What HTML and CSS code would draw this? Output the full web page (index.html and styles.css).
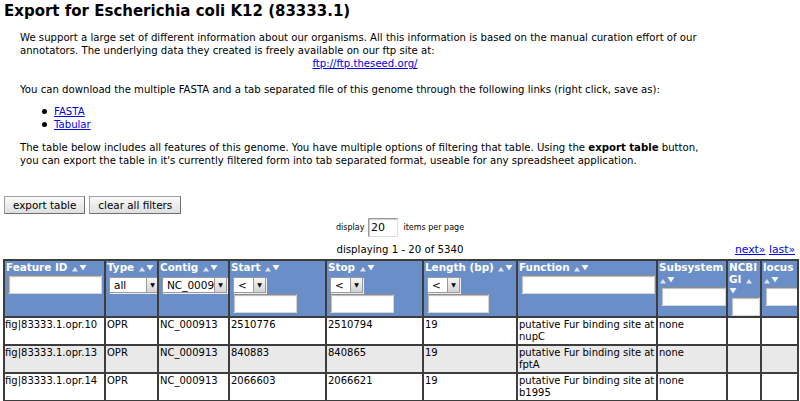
FILE: index.html
```html
<!DOCTYPE html>
<html lang="en">

<head>
    <meta charset="UTF-8">
    <title>Export for Escherichia coli K12</title>
    <link rel="stylesheet" href="styles.css">
</head>

<body>

    <h1 class="title">Export for Escherichia coli K12 (83333.1)</h1>

    <div class="intro">
        <p class="para first">We support a large set of different information about our organisms. All this information is based on the manual curation effort of our annotators. The underlying data they created is freely available on our ftp site at:</p>
        <div class="ftp"><a href="#">ftp://ftp.theseed.org/</a></div>

        <p class="para">You can download the multiple FASTA and a tab separated file of this genome through the following links (right click, save as):</p>
        <ul class="downloads">
            <li><a href="#">FASTA</a></li>
            <li><a href="#">Tabular</a></li>
        </ul>

        <p class="para last">The table below includes all features of this genome. You have multiple options of filtering that table. Using the <b>export table</b> button, you can export the table in it's currently filtered form into tab separated format, useable for any spreadsheet application.</p>
    </div>

    <div class="button-group">
        <button class="btn">export table</button>
        <button class="btn">clear all filters</button>
    </div>

    <div class="per-page">
        display <span class="num-box">20</span> items per page
    </div>

    <div class="pager">
        <span></span>
        <span class="count">displaying 1 - 20 of 5340</span>
        <span class="nav"><a href="#">next&raquo;</a> <a href="#">last&raquo;</a></span>
    </div>

    <table class="features">
        <colgroup>
            <col style="width: 101px">
            <col style="width: 53px">
            <col style="width: 71px">
            <col style="width: 97px">
            <col style="width: 97px">
            <col style="width: 94px">
            <col style="width: 140px">
            <col style="width: 70px">
            <col style="width: 34px">
            <col style="width: 37px">
        </colgroup>
        <thead>
            <tr>
                <th>Feature ID <svg class="arr" width="8" height="8" viewBox="0 0 8 8"><path d="M1 7.5 4 3 7 7.5Z" fill="#dfe4ec"/></svg><svg class="arr" width="8" height="8" viewBox="0 0 8 8"><path d="M0.5 1 7.5 1 4 6.5Z" fill="#f7f9fc"/></svg>
                    <span class="txt w94"></span></th>
                <th>Type <svg class="arr" width="8" height="8" viewBox="0 0 8 8"><path d="M1 7.5 4 3 7 7.5Z" fill="#dfe4ec"/></svg><svg class="arr" width="8" height="8" viewBox="0 0 8 8"><path d="M0.5 1 7.5 1 4 6.5Z" fill="#f7f9fc"/></svg>
                    <span class="sel w50"><span class="sel-val">all</span><span class="sel-btn">&#9660;</span></span></th>
                <th>Contig <svg class="arr" width="8" height="8" viewBox="0 0 8 8"><path d="M1 7.5 4 3 7 7.5Z" fill="#dfe4ec"/></svg><svg class="arr" width="8" height="8" viewBox="0 0 8 8"><path d="M0.5 1 7.5 1 4 6.5Z" fill="#f7f9fc"/></svg>
                    <span class="sel w65"><span class="sel-val">NC_0009</span><span class="sel-btn">&#9660;</span></span></th>
                <th>Start <svg class="arr" width="8" height="8" viewBox="0 0 8 8"><path d="M1 7.5 4 3 7 7.5Z" fill="#dfe4ec"/></svg><svg class="arr" width="8" height="8" viewBox="0 0 8 8"><path d="M0.5 1 7.5 1 4 6.5Z" fill="#f7f9fc"/></svg>
                    <span class="sel w33"><span class="sel-val">&lt;</span><span class="sel-btn">&#9660;</span></span>
                    <span class="txt w64"></span></th>
                <th>Stop <svg class="arr" width="8" height="8" viewBox="0 0 8 8"><path d="M1 7.5 4 3 7 7.5Z" fill="#dfe4ec"/></svg><svg class="arr" width="8" height="8" viewBox="0 0 8 8"><path d="M0.5 1 7.5 1 4 6.5Z" fill="#f7f9fc"/></svg>
                    <span class="sel w33"><span class="sel-val">&lt;</span><span class="sel-btn">&#9660;</span></span>
                    <span class="txt w64"></span></th>
                <th>Length (bp) <svg class="arr" width="8" height="8" viewBox="0 0 8 8"><path d="M1 7.5 4 3 7 7.5Z" fill="#dfe4ec"/></svg><svg class="arr" width="8" height="8" viewBox="0 0 8 8"><path d="M0.5 1 7.5 1 4 6.5Z" fill="#f7f9fc"/></svg>
                    <span class="sel w33"><span class="sel-val">&lt;</span><span class="sel-btn">&#9660;</span></span>
                    <span class="txt w62"></span></th>
                <th>Function <svg class="arr" width="8" height="8" viewBox="0 0 8 8"><path d="M1 7.5 4 3 7 7.5Z" fill="#dfe4ec"/></svg><svg class="arr" width="8" height="8" viewBox="0 0 8 8"><path d="M0.5 1 7.5 1 4 6.5Z" fill="#f7f9fc"/></svg>
                    <span class="txt w134"></span></th>
                <th>Subsystem <svg class="arr" width="8" height="8" viewBox="0 0 8 8"><path d="M1 7.5 4 3 7 7.5Z" fill="#dfe4ec"/></svg><svg class="arr" width="8" height="8" viewBox="0 0 8 8"><path d="M0.5 1 7.5 1 4 6.5Z" fill="#f7f9fc"/></svg>
                    <span class="txt w65"></span></th>
                <th>NCBI GI <svg class="arr" width="8" height="8" viewBox="0 0 8 8"><path d="M1 7.5 4 3 7 7.5Z" fill="#dfe4ec"/></svg> <svg class="arr" width="8" height="8" viewBox="0 0 8 8"><path d="M0.5 1 7.5 1 4 6.5Z" fill="#f7f9fc"/></svg>
                    <span class="txt w29"></span></th>
                <th>locus <svg class="arr" width="8" height="8" viewBox="0 0 8 8"><path d="M1 7.5 4 3 7 7.5Z" fill="#dfe4ec"/></svg><svg class="arr" width="8" height="8" viewBox="0 0 8 8"><path d="M0.5 1 7.5 1 4 6.5Z" fill="#f7f9fc"/></svg>
                    <span class="txt w33"></span></th>
            </tr>
        </thead>
        <tbody>
            <tr>
                <td class="fid">fig|83333.1.opr.10</td>
                <td>OPR</td>
                <td>NC_000913</td>
                <td>2510776</td>
                <td>2510794</td>
                <td>19</td>
                <td>putative Fur binding site at nupC</td>
                <td>none</td>
                <td></td>
                <td></td>
            </tr>
            <tr class="alt">
                <td class="fid">fig|83333.1.opr.13</td>
                <td>OPR</td>
                <td>NC_000913</td>
                <td>840883</td>
                <td>840865</td>
                <td>19</td>
                <td>putative Fur binding site at fptA</td>
                <td>none</td>
                <td></td>
                <td></td>
            </tr>
            <tr>
                <td class="fid">fig|83333.1.opr.14</td>
                <td>OPR</td>
                <td>NC_000913</td>
                <td>2066603</td>
                <td>2066621</td>
                <td>19</td>
                <td>putative Fur binding site at b1995</td>
                <td>none</td>
                <td></td>
                <td></td>
            </tr>
            <tr>
                <td class="fid">fig|83333.1.opr.15</td>
                <td>OPR</td>
                <td>NC_000913</td>
                <td>1234567</td>
                <td>1234585</td>
                <td>19</td>
                <td>putative Fur binding site</td>
                <td>none</td>
                <td></td>
                <td></td>
            </tr>
        </tbody>
    </table>

</body>

</html>
```

FILE: styles.css
```css
body {
    font-family: 'DejaVu Sans', Verdana, sans-serif;
    font-size: 10px;
    line-height: 13px;
    color: #000;
    background-color: #fff;
    margin: 0;
    padding: 0 3px;
}

a {
    color: #0000ee;
}

.title {
    font-size: 15px;
    line-height: 18px;
    font-weight: bold;
    margin: 2px 0 0 1px;
}

.intro {
    width: 690px;
    margin-left: 17px;
    font-size: 10.15px;
}

.para {
    margin: 13px 0 0 0;
}

.para.first {
    margin-top: 11px;
}

.para.last {
    margin-top: 9px;
}

.ftp {
    text-align: center;
}

.downloads {
    list-style: none;
    margin: 8.5px 0 0 0;
    padding-left: 34px;
    line-height: 13.5px;
}

.downloads li::before {
    content: "";
    display: inline-block;
    width: 5px;
    height: 5px;
    border-radius: 50%;
    background: #000;
    margin-left: -12px;
    margin-right: 7px;
    vertical-align: 1px;
}

.button-group {
    margin-top: 29.5px;
    display: flex;
    gap: 4px;
    padding-left: 1px;
}

.btn {
    font-family: 'DejaVu Sans', Verdana, sans-serif;
    font-size: 10.4px;
    height: 18px;
    padding: 0 8px;
    background: linear-gradient(#fbfbfb, #dedede);
    border: 1px solid #a0a0a0;
    border-right-color: #707070;
    border-bottom-color: #707070;
    border-radius: 0;
    color: #000;
}

.per-page {
    margin-top: 4px;
    text-align: center;
    font-size: 8px;
    line-height: 19px;
}

.num-box {
    display: inline-block;
    vertical-align: top;
    width: 26px;
    height: 17px;
    margin: 0 3px 0 1px;
    padding-left: 2px;
    font-size: 11px;
    line-height: 17px;
    text-align: left;
    border: 1px solid #999;
    border-bottom-color: #ddd;
    border-right-color: #ddd;
    box-shadow: inset 1px 1px 1px #ccc;
}

.pager {
    display: grid;
    grid-template-columns: 1fr auto 1fr;
    margin-top: 6px;
    line-height: 13px;
    font-size: 10.2px;
}

.pager .nav {
    text-align: right;
    padding-right: 2px;
    font-size: 10.8px;
}

.features {
    margin-top: 3px;
    table-layout: fixed;
    border-collapse: collapse;
    width: 794px;
}

.features th,
.features td {
    border: 2px solid #3d3d3d;
    vertical-align: top;
    text-align: left;
}

.features th {
    background-color: #6a8ec8;
    color: #fff;
    font-weight: bold;
    font-size: 10.4px;
    line-height: 11.5px;
    padding: 1px 1px 0 1px;
    overflow: hidden;
}

.features td {
    height: 25px;
    line-height: 12.5px;
    padding: 1px 0 0 1px;
}

.features td.fid {
    white-space: nowrap;
    padding-left: 0;
}

.features tr.alt td {
    background-color: #e9e9e9;
}

.arr {
    vertical-align: -1px;
}

.txt {
    display: block;
    height: 17px;
    background: #fff;
    border: 1px solid #8c8c8c;
    border-bottom-color: #d5d5d5;
    border-right-color: #d5d5d5;
    box-shadow: inset 1px 1px 1px #bbb;
    margin-left: 2px;
}

.sel {
    display: flex;
    height: 14px;
    margin: 3px 0 0 2px;
    background: #fff;
    border: 1px solid #9a9a9a;
    box-shadow: 1px 1px 0 #eee;
    color: #000;
    font-weight: normal;
    font-size: 10.5px;
    line-height: 14px;
    overflow: hidden;
}

.sel-val {
    flex: 1;
    padding-left: 4px;
    white-space: nowrap;
    overflow: hidden;
}

.sel-btn {
    width: 11px;
    flex: none;
    background: linear-gradient(#f4f4f4, #d4d4d4);
    border-left: 1px solid #9a9a9a;
    font-size: 6px;
    text-align: center;
    line-height: 14px;
}

.sel + .txt {
    margin-top: 1px;
}

.w94 { width: 92px; margin-top: 1px; }
.w50 { width: 48px; }
.w65 { width: 63px; }
.w33 { width: 31px; }
.w64 { width: 62px; }
.w62 { width: 60px; }
.w134 { width: 132px; margin-top: 1px; }
.w29 { width: 27px; margin-top: 0; }
.w65.txt { width: 63px; margin-top: 2px; }
.w33.txt { width: 31px; margin-top: 2px; }
```
